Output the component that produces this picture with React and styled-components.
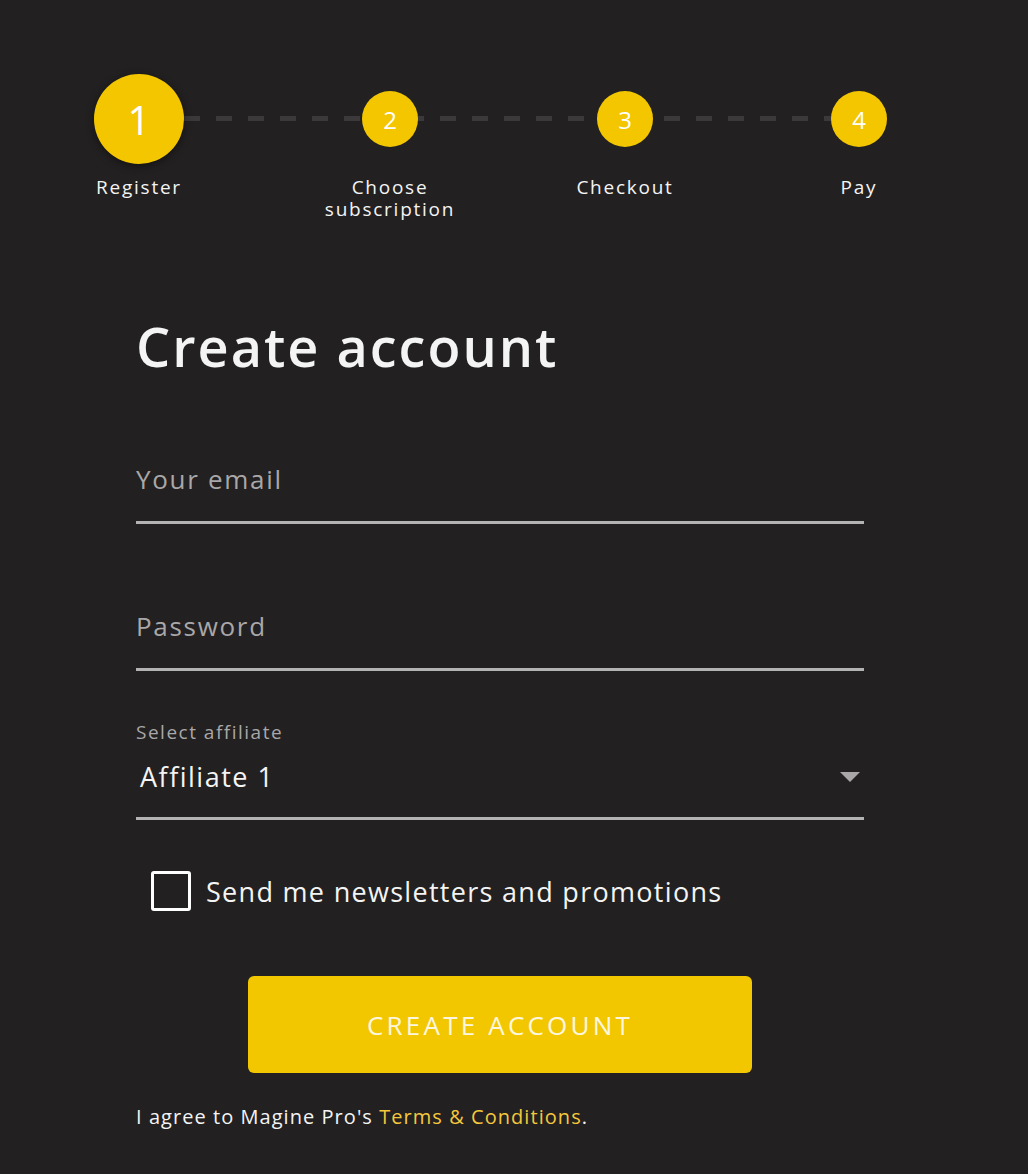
import styled, { createGlobalStyle } from 'styled-components';

const GlobalStyle = createGlobalStyle`
  html, body {
    margin: 0;
    padding: 0;
    background: #222021;
  }
  body {
    font-family: 'Open Sans', 'Noto Sans', sans-serif;
    color: #f4f4f4;
  }
`;

const steps = [
  { n: 1, label: 'Register', active: true, gap: 0 },
  { n: 2, label: 'Choose subscription', gap: 101 },
  { n: 3, label: 'Checkout', gap: 85 },
  { n: 4, label: 'Pay', gap: 84 },
];

function App() {
  return (
    <>
      <GlobalStyle />
      <Page>
        <Stepper>
          <DashLine />
          {steps.map((s) => (
            <Step key={s.n} $gap={s.gap}>
              <CircleBox>
                <Circle $active={s.active}>{s.n}</Circle>
              </CircleBox>
              <StepLabel>{s.label}</StepLabel>
            </Step>
          ))}
        </Stepper>

        <Form>
          <Title>Create account</Title>

          <Field>
            <Input type='email' placeholder='Your email' />
          </Field>

          <Field>
            <Input type='password' placeholder='Password' />
          </Field>

          <SelectField>
            <SelectLabel>Select affiliate</SelectLabel>
            <SelectRow>
              <SelectValue>Affiliate 1</SelectValue>
              <Caret />
            </SelectRow>
          </SelectField>

          <CheckRow>
            <Box />
            <span>Send me newsletters and promotions</span>
          </CheckRow>

          <ButtonWrap>
            <Button>CREATE ACCOUNT</Button>
          </ButtonWrap>

          <Terms>
            I agree to Magine Pro's <a href='#'>Terms &amp; Conditions</a>.
          </Terms>
        </Form>
      </Page>
    </>
  );
}

const Page = styled.div`
  padding: 74px 0 60px;
  min-height: 1174px;
  box-sizing: border-box;
`;

const Stepper = styled.div`
  position: relative;
  display: flex;
  padding-left: 64px;
`;

const DashLine = styled.div`
  position: absolute;
  left: 184px;
  width: 650px;
  top: 42px;
  height: 5px;
  background: repeating-linear-gradient(
    to right,
    #3b393a 0 16px,
    transparent 16px 32px
  );
`;

const Step = styled.div`
  position: relative;
  width: 150px;
  margin-left: ${(p) => p.$gap}px;
  display: flex;
  flex-direction: column;
  align-items: center;
`;

const CircleBox = styled.div`
  height: 90px;
  display: flex;
  align-items: center;
`;

const Circle = styled.div`
  width: ${(p) => (p.$active ? 90 : 56)}px;
  height: ${(p) => (p.$active ? 90 : 56)}px;
  border-radius: 50%;
  background: #f3c600;
  color: #fff;
  display: flex;
  align-items: center;
  justify-content: center;
  font-size: ${(p) => (p.$active ? 40 : 24)}px;
  box-shadow: ${(p) => (p.$active ? '0 2px 8px rgba(0,0,0,0.45)' : 'none')};
`;

const StepLabel = styled.div`
  margin-top: 12px;
  font-size: 19px;
  line-height: 22px;
  letter-spacing: 1.75px;
  text-align: center;
  width: 150px;
`;

const Form = styled.div`
  width: 728px;
  margin: 94px 0 0 136px;
  display: flex;
  flex-direction: column;
`;

const Title = styled.h1`
  margin: 0 0 81px;
  font-size: 54px;
  line-height: 64px;
  font-weight: 600;
  letter-spacing: 2px;
`;

const Field = styled.div`
  border-bottom: 3px solid #b3b3b3;
  margin-bottom: 82px;
`;

const Input = styled.input`
  width: 100%;
  box-sizing: border-box;
  background: transparent;
  border: none;
  outline: none;
  padding: 0 0 22px;
  font-family: inherit;
  font-size: 26px;
  line-height: 40px;
  letter-spacing: 1.7px;
  color: #fff;
  &::placeholder {
    color: #a9a7a8;
  }
`;

const SelectField = styled.div`
  border-bottom: 3px solid #b3b3b3;
  margin-top: -33px;
`;

const SelectLabel = styled.div`
  font-size: 19px;
  line-height: 24px;
  letter-spacing: 1.5px;
  color: #a9a7a8;
`;

const SelectRow = styled.div`
  display: flex;
  align-items: center;
  justify-content: space-between;
  padding: 13px 4px 20px 4px;
`;

const SelectValue = styled.span`
  font-size: 27px;
  line-height: 40px;
  letter-spacing: 1.5px;
`;

const Caret = styled.span`
  width: 0;
  height: 0;
  border-left: 10px solid transparent;
  border-right: 10px solid transparent;
  border-top: 10px solid #a9a7a8;
`;

const CheckRow = styled.label`
  display: flex;
  align-items: center;
  gap: 15px;
  margin: 51px 0 0 15px;
  font-size: 27px;
  letter-spacing: 1.3px;
`;

const Box = styled.span`
  width: 34px;
  height: 34px;
  border: 3px solid #fff;
  border-radius: 3px;
  flex-shrink: 0;
`;

const ButtonWrap = styled.div`
  display: flex;
  justify-content: center;
  margin-top: 65px;
`;

const Button = styled.button`
  width: 504px;
  height: 97px;
  border: none;
  border-radius: 6px;
  background: #f3c700;
  color: #fdf7e0;
  font-family: inherit;
  font-size: 26px;
  letter-spacing: 3.2px;
  cursor: pointer;
`;

const Terms = styled.p`
  margin: 30px 0 0;
  font-size: 20px;
  letter-spacing: 1.05px;

  a {
    color: #f5c83c;
    text-decoration: none;
  }
`;

export default App;
